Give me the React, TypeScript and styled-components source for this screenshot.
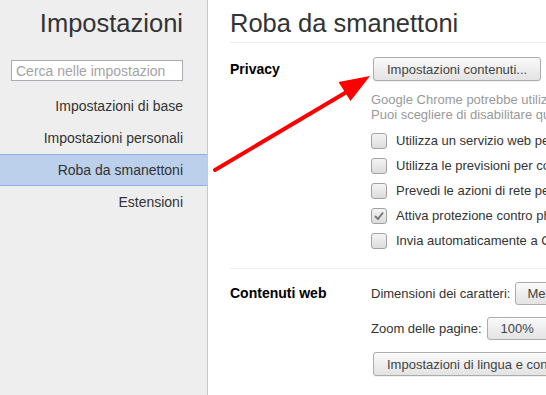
import React from "react";
import styled, { createGlobalStyle } from "styled-components";

const Global = createGlobalStyle`
  html, body { margin: 0; padding: 0; background: #fff; }
  body { font-family: "Liberation Sans", Arial, sans-serif; }
`;

const Page = styled.div`
  position: relative;
  display: flex;
  width: 546px;
  height: 395px;
  overflow: hidden;
`;

const Sidebar = styled.nav`
  flex: none;
  width: 207px;
  background: #eeeeee;
  border-right: 1px solid #c8c8c8;
  display: flex;
  flex-direction: column;
`;

const SideTitle = styled.h1`
  margin: 0;
  padding: 8px 24px 0 0;
  font-weight: normal;
  font-size: 25.5px;
  line-height: 30px;
  text-align: right;
  color: #333;
`;

const Search = styled.input`
  margin: 22px 0 0 11px;
  width: 172px;
  height: 21px;
  box-sizing: border-box;
  border: 1px solid #aaaab3;
  padding: 0 4px;
  font: 14px "Liberation Sans", Arial, sans-serif;
  color: #333;
  background: #fff;
  outline: none;
  &::placeholder { color: #a3a3a3; }
`;

const NavList = styled.ul`
  list-style: none;
  margin: 9px 0 0;
  padding: 0;
`;

const NavItem = styled.li<{ $active?: boolean }>`
  box-sizing: border-box;
  height: 32px;
  line-height: 30px;
  padding-right: 24px;
  text-align: right;
  font-size: 14px;
  color: #333;
  border-top: 1px solid ${(p) => (p.$active ? "#8eaee3" : "transparent")};
  border-bottom: 1px solid ${(p) => (p.$active ? "#8eaee3" : "transparent")};
  background: ${(p) => (p.$active ? "#bccfeb" : "transparent")};
`;

const Main = styled.main`
  flex: 1;
  min-width: 0;
  padding-left: 22px;
  white-space: nowrap;
`;

const MainTitle = styled.h1`
  margin: 0;
  padding: 8px 0 4px;
  border-bottom: 1px solid #eeeeee;
  font-weight: normal;
  font-size: 25.5px;
  line-height: 30px;
  color: #333;
`;

const Section = styled.section<{ $top: number; $bottom: number; $line?: boolean }>`
  display: grid;
  grid-template-columns: 141px 1fr;
  padding: ${(p) => p.$top}px 0 ${(p) => p.$bottom}px;
  border-bottom: ${(p) => (p.$line ? "1px solid #eeeeee" : "none")};
`;

const SectionLabel = styled.h3<{ $lh: number }>`
  margin: 0;
  font-size: 14px;
  font-weight: bold;
  line-height: ${(p) => p.$lh}px;
  color: #000;
`;

const SectionBody = styled.div`
  display: flex;
  flex-direction: column;
  align-items: flex-start;
  min-width: 0;
`;

const Button = styled.button`
  margin-left: 2px;
  height: 24px;
  padding: 0 13px;
  border: 1px solid #acacac;
  border-radius: 3px;
  background: linear-gradient(#fafafa, #e3e3e3);
  box-shadow: 0 1px 1px rgba(0, 0, 0, 0.06);
  font: 13px "Liberation Sans", Arial, sans-serif;
  color: #444;
  white-space: nowrap;
  flex: none;
`;

const Description = styled.div`
  margin-top: 11px;
  font-size: 13px;
  line-height: 15px;
  color: #999;
`;

const CheckList = styled.div`
  margin-top: 6px;
  display: flex;
  flex-direction: column;
`;

const CheckRow = styled.label`
  display: flex;
  align-items: center;
  gap: 9px;
  height: 25px;
  font-size: 13px;
  color: #333;
`;

const Box = styled.span`
  flex: none;
  box-sizing: border-box;
  width: 16px;
  height: 16px;
  border: 1px solid #a2a2a2;
  border-radius: 3px;
  background: linear-gradient(#f4f4f4, #dcdcdc);
  display: flex;
  align-items: center;
  justify-content: center;
`;

const Rows = styled.div`
  display: flex;
  flex-direction: column;
  gap: 12px;
  align-items: flex-start;
`;

const Row = styled.div`
  display: flex;
  align-items: center;
  gap: 5px;
  height: 23px;
  font-size: 13px;
  color: #333;
`;

const Select = styled.div<{ $pad: number; $w: number }>`
  box-sizing: border-box;
  display: flex;
  align-items: center;
  justify-content: space-between;
  width: ${(p) => p.$w}px;
  height: 23px;
  padding: 0 8px 0 ${(p) => p.$pad}px;
  border: 1px solid #acacac;
  border-radius: 3px;
  background: linear-gradient(#fafafa, #e3e3e3);
  font-size: 13px;
  color: #444;
  flex: none;
`;

const Caret = styled.span`
  width: 0;
  height: 0;
  border-left: 4px solid transparent;
  border-right: 4px solid transparent;
  border-top: 5px solid #555;
`;

const Overlay = styled.svg`
  position: absolute;
  left: 0;
  top: 0;
  pointer-events: none;
`;

const checks = [
  { text: "Utilizza un servizio web per risolvere gli errori di navigazione", on: false },
  { text: "Utilizza le previsioni per completare ricerche e URL digitati nella barra degli indirizzi", on: false },
  { text: "Prevedi le azioni di rete per migliorare il rendimento del caricamento delle pagine", on: false },
  { text: "Attiva protezione contro phishing e malware", on: true },
  { text: "Invia automaticamente a Google statistiche sull'utilizzo e rapporti sugli arresti anomali", on: false },
];

export default function App() {
  return (
    <>
      <Global />
      <Page>
        <Sidebar>
          <SideTitle>Impostazioni</SideTitle>
          <Search placeholder="Cerca nelle impostazion" />
          <NavList>
            <NavItem>Impostazioni di base</NavItem>
            <NavItem>Impostazioni personali</NavItem>
            <NavItem $active>Roba da smanettoni</NavItem>
            <NavItem>Estensioni</NavItem>
          </NavList>
        </Sidebar>
        <Main>
          <MainTitle>Roba da smanettoni</MainTitle>
          <Section $top={14} $bottom={15} $line>
            <SectionLabel $lh={24}>Privacy</SectionLabel>
            <SectionBody>
              <Button>Impostazioni contenuti...</Button>
              <Description>
                <div>Google Chrome potrebbe utilizzare servizi web per migliorare la tua esperienza di navigazione.</div>
                <div>Puoi scegliere di disabilitare questi servizi.</div>
              </Description>
              <CheckList>
                {checks.map((c) => (
                  <CheckRow key={c.text}>
                    <Box>
                      {c.on && (
                        <svg width="10" height="9" viewBox="0 0 10 9">
                          <path d="M1 5 L4 8 L9 1.5" fill="none" stroke="#7a7a7a" strokeWidth="2" />
                        </svg>
                      )}
                    </Box>
                    {c.text}
                  </CheckRow>
                ))}
              </CheckList>
            </SectionBody>
          </Section>
          <Section $top={13} $bottom={0}>
            <SectionLabel $lh={23}>Contenuti web</SectionLabel>
            <Rows>
              <Row>
                Dimensioni dei caratteri:
                <Select $pad={11} $w={90}>
                  Medio
                  <Caret />
                </Select>
              </Row>
              <Row>
                Zoom delle pagine:
                <Select $pad={13} $w={90}>
                  100%
                  <Caret />
                </Select>
              </Row>
              <Button>Impostazioni di lingua e controllo ortografico...</Button>
            </Rows>
          </Section>
        </Main>
        <Overlay width="546" height="395" viewBox="0 0 546 395">
          <line x1="215" y1="170" x2="350" y2="90" stroke="#ff0000" strokeWidth="4" strokeLinecap="round" />
          <polygon points="370,76 338.5,82 350.5,101" fill="#ff0000" />
        </Overlay>
      </Page>
    </>
  );
}
